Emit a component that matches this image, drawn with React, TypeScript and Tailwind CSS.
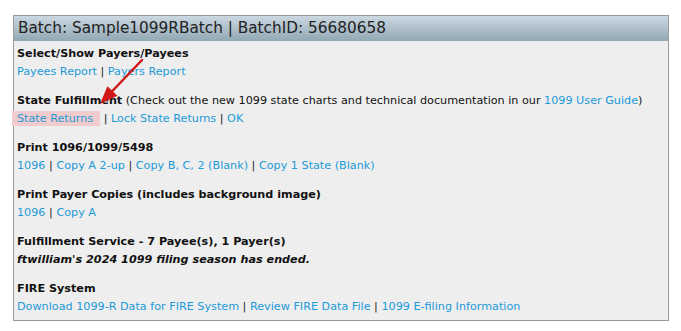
const sep = <span className="text-[#222]"> | </span>;

function Link({ children }: { children: React.ReactNode }) {
  return <a className="text-[#1d9ad9] cursor-pointer">{children}</a>;
}

export default function App() {
  return (
    <div className="w-[681px] h-[331px] bg-white pt-[15px] pl-[13px] font-['DejaVu_Sans',Verdana,sans-serif] text-[11.2px] leading-[18px] text-[#111]">
      <div className="relative w-[656px] h-[306px] border border-[#999] bg-[#eeeeee]">
        <div className="h-[25px] bg-gradient-to-b from-[#cbd8e2] to-[#92a8b3] pl-[4px] text-[15.3px] leading-[25px] text-[#222]">
          Batch: Sample1099RBatch | BatchID: 56680658
        </div>

        <div className="px-[3px] pt-[4px]">
          <section>
            <h3 className="font-bold">Select/Show Payers/Payees</h3>
            <div>
              <Link>Payees Report</Link>
              {sep}
              <Link>Payers Report</Link>
            </div>
          </section>

          <section className="mt-[11px]">
            <div>
              <span className="font-bold">State Fulfillment</span> (Check out the new 1099 state charts and technical documentation in our{" "}
              <Link>1099 User Guide</Link>)
            </div>
            <div>
              <span className="-ml-[5px] pl-[5px] pr-[7px] py-[1px] bg-[#f2cccc]">
                <Link>State Returns</Link>
              </span>
              {sep}
              <Link>Lock State Returns</Link>
              {sep}
              <Link>OK</Link>
            </div>
          </section>

          <section className="mt-[11px]">
            <h3 className="font-bold">Print 1096/1099/5498</h3>
            <div>
              <Link>1096</Link>
              {sep}
              <Link>Copy A 2-up</Link>
              {sep}
              <Link>Copy B, C, 2 (Blank)</Link>
              {sep}
              <Link>Copy 1 State (Blank)</Link>
            </div>
          </section>

          <section className="mt-[11px]">
            <h3 className="font-bold">Print Payer Copies (includes background image)</h3>
            <div>
              <Link>1096</Link>
              {sep}
              <Link>Copy A</Link>
            </div>
          </section>

          <section className="mt-[11px]">
            <h3 className="font-bold">Fulfillment Service - 7 Payee(s), 1 Payer(s)</h3>
            <div className="font-bold italic">ftwilliam's 2024 1099 filing season has ended.</div>
          </section>

          <section className="mt-[11px]">
            <h3 className="font-bold">FIRE System</h3>
            <div>
              <Link>Download 1099-R Data for FIRE System</Link>
              {sep}
              <Link>Review FIRE Data File</Link>
              {sep}
              <Link>1099 E-filing Information</Link>
            </div>
          </section>
        </div>

        <svg className="absolute left-[80px] top-[40px]" width="56" height="56" viewBox="0 0 56 56">
          <line x1="48" y1="4" x2="18.4" y2="35" stroke="#d01818" strokeWidth="2.5" strokeLinecap="round" />
          <polygon points="6,48 23.4,39.8 13.4,30.2" fill="#d01818" />
        </svg>
      </div>
    </div>
  );
}
